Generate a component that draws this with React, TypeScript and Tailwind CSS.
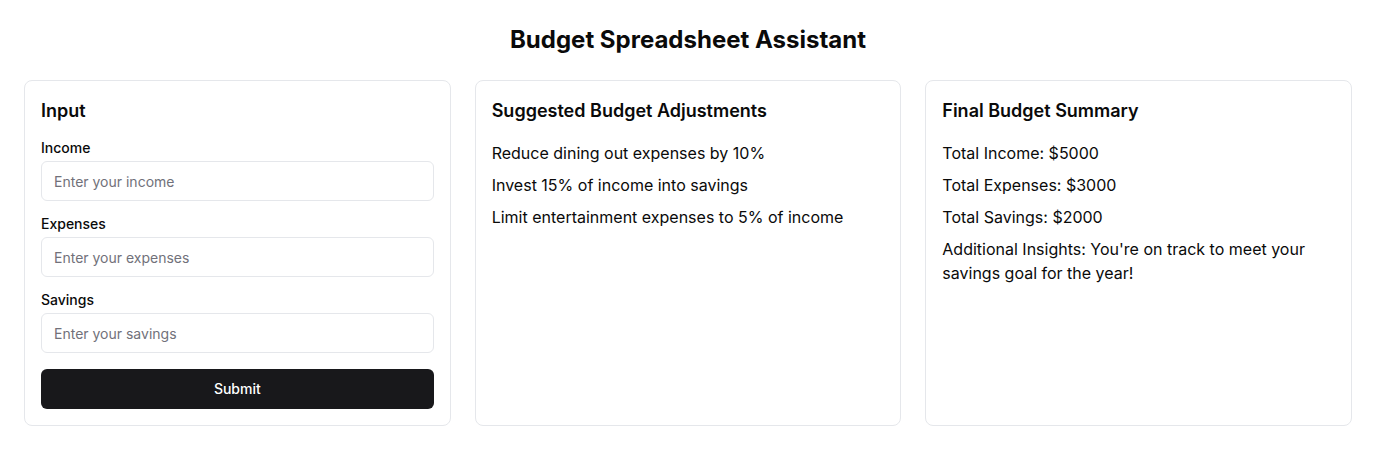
import React from "react";

const adjustments = [
  "Reduce dining out expenses by 10%",
  "Invest 15% of income into savings",
  "Limit entertainment expenses to 5% of income",
];

const summary = [
  "Total Income: $5000",
  "Total Expenses: $3000",
  "Total Savings: $2000",
  "Additional Insights: You're on track to meet your savings goal for the year!",
];

const fields = [
  { label: "Income", placeholder: "Enter your income" },
  { label: "Expenses", placeholder: "Enter your expenses" },
  { label: "Savings", placeholder: "Enter your savings" },
];

export default function App() {
  return (
    <div
      className="min-h-[450px] bg-white p-6 text-[#0a0a0a]"
      style={{ fontFamily: "Inter, 'Noto Sans', sans-serif" }}
    >
      <h1 className="mb-6 text-center text-2xl font-bold leading-8">Budget Spreadsheet Assistant</h1>
      <div className="grid grid-cols-3 gap-6">
        {/* Input */}
        <div className="rounded-lg border border-[#e5e7eb] p-4">
          <h2 className="mb-3 text-lg font-semibold leading-7">Input</h2>
          <div className="flex flex-col gap-3">
            {fields.map((f) => (
              <div key={f.label}>
                <label className="mb-[3px] block pt-px text-sm font-medium leading-5">{f.label}</label>
                <input
                  className="h-10 w-full rounded-md border border-[#e5e7eb] px-3 text-sm placeholder:text-[#71717a] outline-none"
                  placeholder={f.placeholder}
                />
              </div>
            ))}
          </div>
          <button className="mt-4 h-10 w-full rounded-md bg-[#18181b] text-sm font-medium text-white">
            Submit
          </button>
        </div>

        {/* Adjustments */}
        <div className="rounded-lg border border-[#e5e7eb] p-4">
          <h2 className="mb-4 text-lg font-semibold leading-7">Suggested Budget Adjustments</h2>
          <div className="flex flex-col gap-2">
            {adjustments.map((a) => (
              <p key={a} className="text-base leading-6">{a}</p>
            ))}
          </div>
        </div>

        {/* Summary */}
        <div className="rounded-lg border border-[#e5e7eb] p-4">
          <h2 className="mb-4 text-lg font-semibold leading-7">Final Budget Summary</h2>
          <div className="flex flex-col gap-2">
            {summary.map((s) => (
              <p key={s} className="text-base leading-6">{s}</p>
            ))}
          </div>
        </div>
      </div>
    </div>
  );
}
